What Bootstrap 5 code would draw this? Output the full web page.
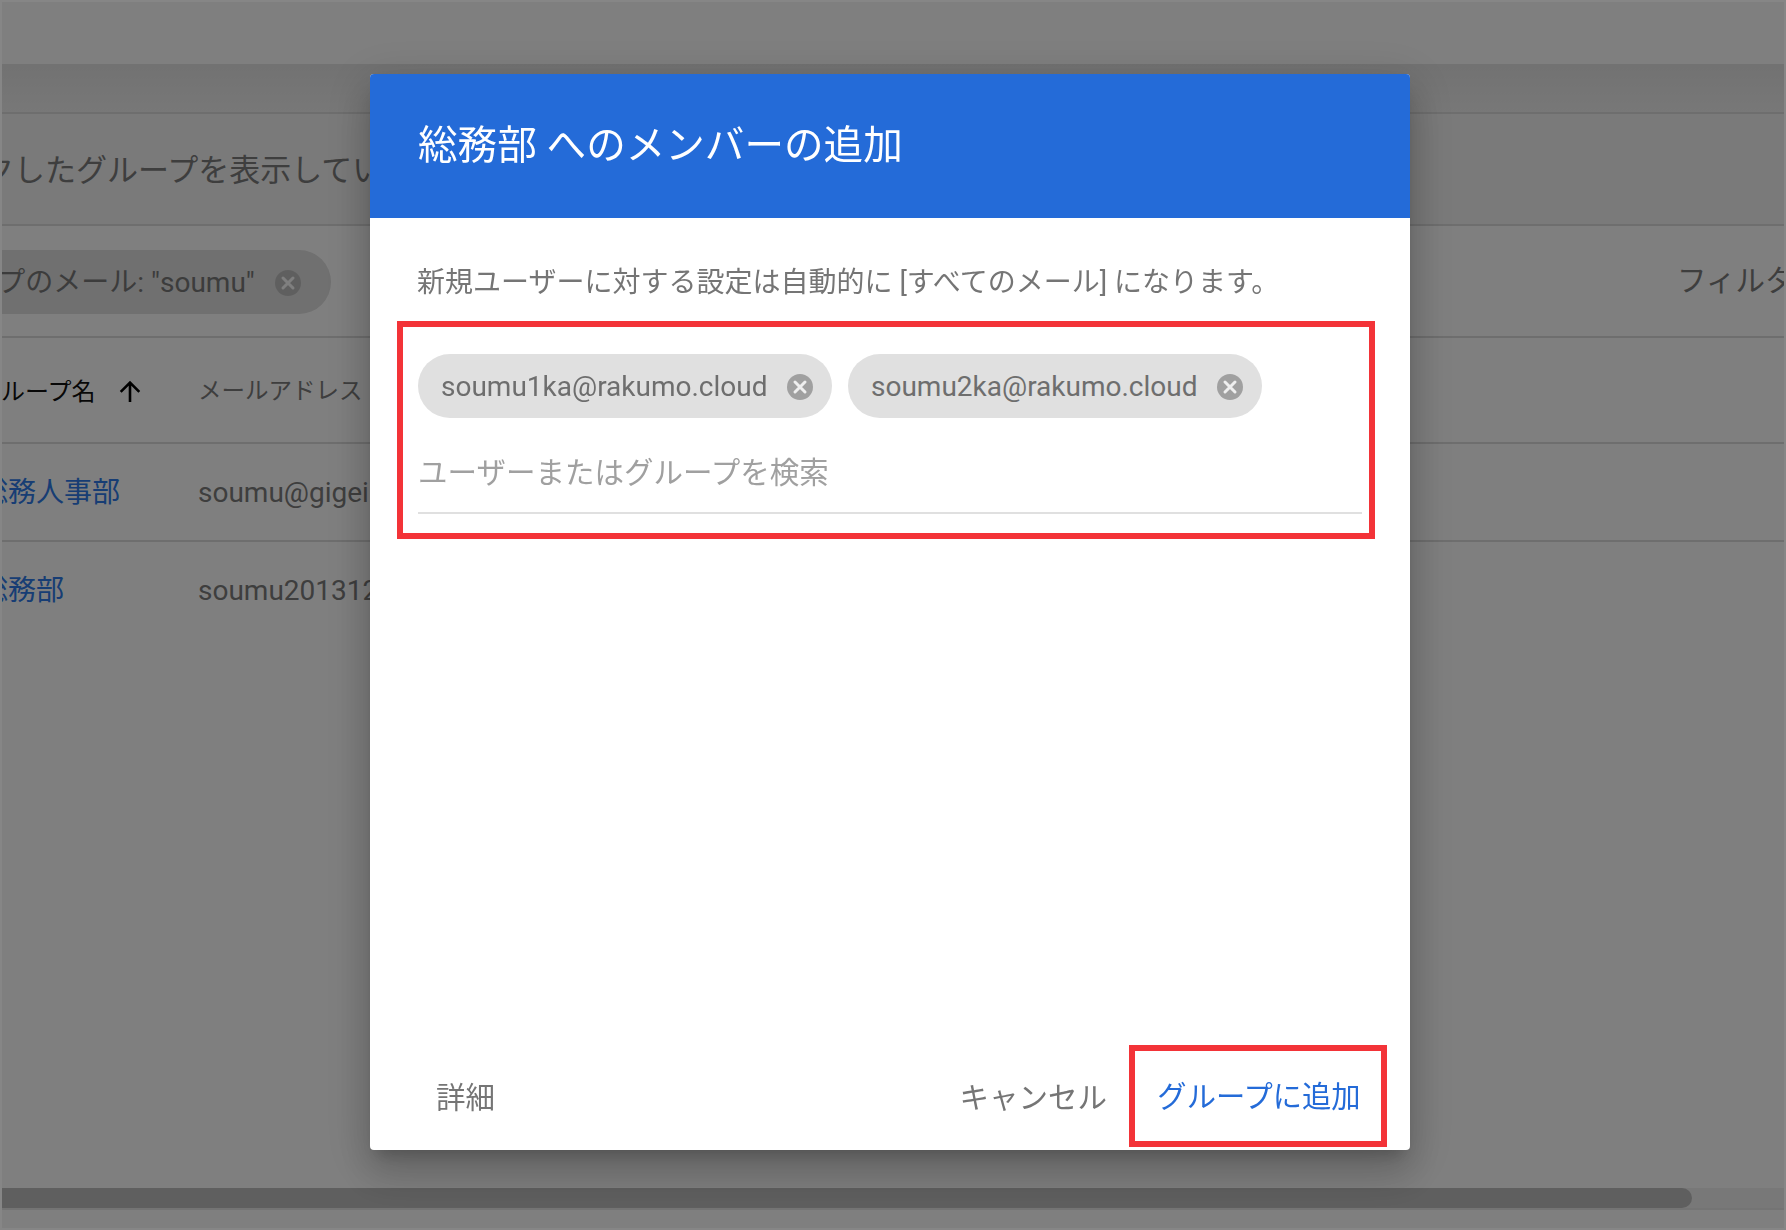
<!DOCTYPE html>
<html lang="ja">
<head>
<meta charset="utf-8">
<title>総務部 へのメンバーの追加</title>
<link href="https://cdn.jsdelivr.net/npm/bootstrap@5.3.0/dist/css/bootstrap.min.css" rel="stylesheet">
<style>
html,body{height:100%;overflow:hidden}
body{font-family:Roboto,"Noto Sans CJK JP",sans-serif;background:#fff;color:#787878;position:relative}
.pg{height:1230px;width:1786px;overflow:hidden;border-left:2px solid #fff;display:flex;flex-direction:column;background:#fff}
.topbar{height:64px;flex:none;background:#fff}
.band{height:50px;flex:none;background:linear-gradient(#e4e4e4,#f0f0f0);border-bottom:2px solid #dcdcdc}
.descrow{height:112px;flex:none;background:#f4f4f4;border-bottom:2px solid #dcdcdc;font-size:31px;white-space:nowrap;overflow:hidden}
.desctext{margin-left:-112px;color:#7c7c7c;line-height:114px}
.filterrow{height:112px;flex:none;border-bottom:2px solid #dcdcdc;white-space:nowrap;overflow:hidden}
.fchip{height:64px;margin-top:1px;margin-left:-111px;padding:2px 30px 0 24px;border-radius:32px;background:#e0e0e0;font-size:28px;color:#787878;gap:20px}
.faddl{font-size:29.500px;margin-left:auto;margin-right:-100px;width:209px;color:#7c7c7c}
.thead{height:106px;flex:none;border-bottom:2px solid #dcdcdc;font-size:24px;white-space:nowrap;overflow:hidden;padding-top:3px}
.tbrow{height:98px;flex:none;border-bottom:2px solid #dcdcdc;font-size:28px;white-space:nowrap;overflow:hidden;padding-top:2px}
.tblast{border-bottom:0;padding-top:0}
.c1h{color:#111;gap:22px;width:221px;margin-left:-25px;flex:none}
.c2{color:#7c7c7c}
.thead .c2{font-size:23.500px}
.lnk{color:#2f7ae8;text-decoration:none;width:218px;flex:none;margin-left:-22px}
.spacer{flex:1}
.hbar{height:20px;flex:none;background:#f0f0f0;display:flex}
.hthumb{width:1690px;height:20px;flex:none;background:#bebebe;border-radius:0 10px 10px 0}
.hline{height:2px;flex:none;background:#e8e8e8;margin-bottom:20px}
.frame{position:fixed;inset:0;border:2px solid #868686;z-index:1060;pointer-events:none}
.modal{overflow:hidden}
.dlg{max-width:none;width:1040px;margin:74px 0 0 370px}
.dlgc{height:1076px;border:0;border-radius:4px;box-shadow:0 24px 38px 3px rgba(0,0,0,.14),0 9px 46px 8px rgba(0,0,0,.12),0 11px 15px -7px rgba(0,0,0,.2)}
.dlgh{height:144px;flex:none;background:#246bd8;color:#fff;border:0;border-radius:4px 4px 0 0;padding:0 48px}
.dlgt{font-size:39.600px;font-weight:400;line-height:1.2}
.dlgb{padding:45px 27px 0;flex:1 1 auto}
.note{font-size:28px;line-height:40px;color:#757575;margin:0 0 18px 20px;white-space:nowrap}
.redbox{border:6px solid #f33338;height:218px;width:978px;padding:27px 0 0 15px}
.pillrow{gap:16px}
.pill{height:64px;width:414px;border-radius:32px;background:#e0e0e0;color:#6e6e6e;font-size:28px;padding:2px 0 0 23px;white-space:nowrap}
.pill svg{margin-left:auto;margin-right:19px;flex:none}
.srch{width:944px;height:82px;margin-top:14px;border:0;border-bottom:2px solid #e0e0e0;border-radius:0;padding:2px 0 0;font-size:29.500px;color:#666;background:transparent;box-shadow:none}
.srch::placeholder{color:#a0a0a0;opacity:1}
.dlgf{border:0;padding:0 23px 3px 48px;height:105px;flex:none;flex-wrap:nowrap;justify-content:space-between}
.dlgf>*{margin:0}
.fbtn{font-size:29.500px;color:#757575;background:none;border:0;padding:4px 18px 0}
.fbtn2{font-size:29.300px;color:#246bd8;background:none;border:6px solid #f33338;border-radius:0;width:258px;height:102px;padding:3px 0 0 2px;margin-left:4px}
</style>
</head>
<body>
<div class="pg">
  <div class="topbar"></div>
  <div class="band"></div>
  <div class="descrow">
    <div class="desctext">クリックしたグループを表示しています</div>
  </div>
  <div class="filterrow d-flex align-items-center">
    <div class="fchip d-flex align-items-center">
      <span>グループのメール: "soumu"</span>
      <svg width="26" height="26" viewBox="0 0 26 26"><circle cx="13" cy="13" r="13" fill="#bfbfbf"/><path d="M8 8l10 10M18 8L8 18" stroke="#fff" stroke-width="3" stroke-linecap="round"/></svg>
    </div>
    <div class="faddl">フィルタを追加</div>
  </div>
  <div class="thead d-flex align-items-center">
    <div class="c1h d-flex align-items-center">
      <span>グループ名</span>
      <svg width="24" height="24" viewBox="0 0 24 24"><path d="M12 22V3M2.700 11.800L12 2.500l9.300 9.300" fill="none" stroke="#000" stroke-width="2.600"/></svg>
    </div>
    <div class="c2">メールアドレス</div>
  </div>
  <div class="tbrow d-flex align-items-center">
    <a class="lnk" href="#">総務人事部</a>
    <div class="c2">soumu@gigei.example.com</div>
  </div>
  <div class="tbrow tblast d-flex align-items-center">
    <a class="lnk" href="#">総務部</a>
    <div class="c2">soumu201312@example.com</div>
  </div>
  <div class="spacer"></div>
  <div class="hbar"><div class="hthumb"></div></div>
  <div class="hline"></div>
</div>
<div class="modal-backdrop show"></div>
<div class="modal d-block">
  <div class="modal-dialog dlg">
    <div class="modal-content dlgc">
      <div class="modal-header dlgh">
        <h1 class="modal-title dlgt">総務部 へのメンバーの追加</h1>
      </div>
      <div class="modal-body dlgb">
        <p class="note">新規ユーザーに対する設定は自動的に [すべてのメール] になります。</p>
        <div class="redbox">
          <div class="d-flex pillrow">
            <div class="pill d-flex align-items-center"><span>soumu1ka@rakumo.cloud</span>
              <svg width="26" height="26" viewBox="0 0 26 26"><circle cx="13" cy="13" r="13" fill="#a0a0a0"/><path d="M8 8l10 10M18 8L8 18" stroke="#eee" stroke-width="3" stroke-linecap="round"/></svg></div>
            <div class="pill d-flex align-items-center"><span>soumu2ka@rakumo.cloud</span>
              <svg width="26" height="26" viewBox="0 0 26 26"><circle cx="13" cy="13" r="13" fill="#a0a0a0"/><path d="M8 8l10 10M18 8L8 18" stroke="#eee" stroke-width="3" stroke-linecap="round"/></svg></div>
          </div>
          <input class="form-control srch" type="text" placeholder="ユーザーまたはグループを検索">
        </div>
      </div>
      <div class="modal-footer dlgf">
        <button class="btn fbtn" type="button">詳細</button>
        <div class="d-flex align-items-center">
          <button class="btn fbtn" type="button">キャンセル</button>
          <button class="btn fbtn2" type="button">グループに追加</button>
        </div>
      </div>
    </div>
  </div>
</div>
<div class="frame"></div>
<script src="https://cdn.jsdelivr.net/npm/bootstrap@5.3.0/dist/js/bootstrap.bundle.min.js"></script>
</body>
</html>
